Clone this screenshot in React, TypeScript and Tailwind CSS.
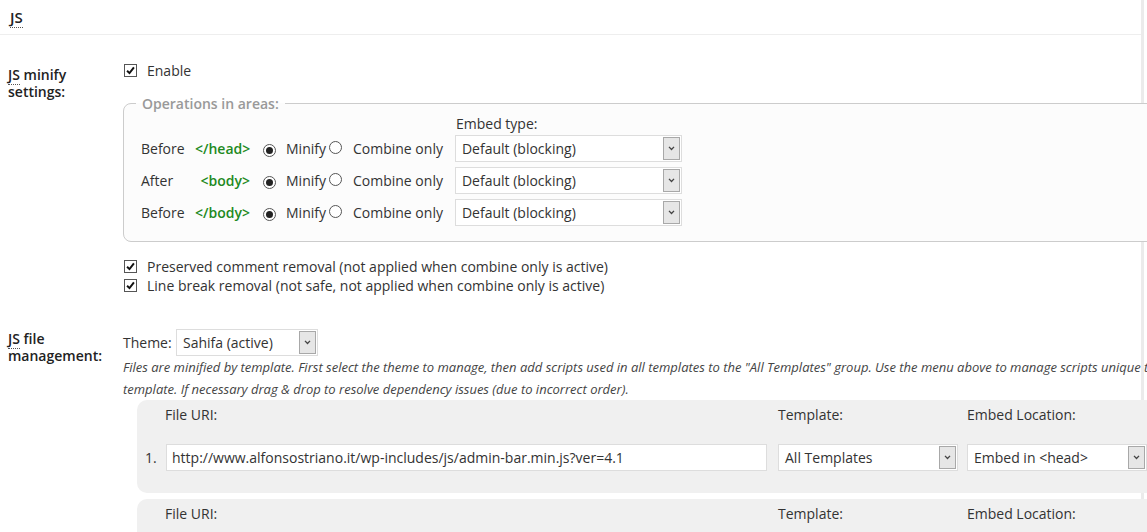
import React from 'react';

// W3 Total Cache style "JS" minify settings panel (static mockup)

const FONT = { fontFamily: '"Open Sans", "Liberation Sans", sans-serif' };

const Check = () => (
  <span className="inline-flex h-[13px] w-[13px] shrink-0 items-center justify-center border border-[#555] bg-white">
    <svg viewBox="0 0 10 10" className="h-[9px] w-[9px]">
      <path d="M1.2 5.2 L3.9 7.9 L8.8 1.6" fill="none" stroke="#111" strokeWidth="2.2" />
    </svg>
  </span>
);

const Radio = ({ on }: { on?: boolean }) => (
  <span className="inline-flex h-[13px] w-[13px] shrink-0 items-center justify-center rounded-full border border-[#555] bg-white">
    {on && <span className="h-[7px] w-[7px] rounded-full bg-[#222]" />}
  </span>
);

const Select = ({ value, className = '' }: { value: string; className?: string }) => (
  <div className={`flex h-[27px] shrink-0 items-stretch border border-[#ddd] bg-white ${className}`}>
    <span className="flex flex-1 items-center overflow-hidden whitespace-nowrap pl-[6px] text-[14px] text-[#333]">{value}</span>
    <span className="my-[1px] mr-[1px] flex w-[17px] items-center justify-center border border-[#a8a8a8] bg-[#e6e6e6]">
      <svg viewBox="0 0 8 6" className="h-[5px] w-[7px]">
        <path d="M1 1 L4 4.2 L7 1" fill="none" stroke="#444" strokeWidth="1.6" />
      </svg>
    </span>
  </div>
);

const AREAS = [
  { pos: 'Before', tag: '</head>' },
  { pos: 'After', tag: '<body>' },
  { pos: 'Before', tag: '</body>' },
];

const Abbr = ({ children }: { children: React.ReactNode }) => (
  <span className="border-b border-dotted border-[#555] leading-[15px]">{children}</span>
);

const FileBox = ({ filled }: { filled?: boolean }) => (
  <div className="ml-[14px] w-[1040px] rounded-[10px] bg-[#f0f0f0] pb-[22px] pt-[5px]">
    <div className="flex h-[18px] items-center text-[14px] text-[#333]">
      <span className="ml-[28px] w-[613px]">File URI:</span>
      <span className="w-[189px]">Template:</span>
      <span>Embed Location:</span>
    </div>
    {filled && (
      <div className="mt-[21px] flex items-center">
        <span className="ml-[8px] w-[21px] text-[14px] text-[#333]">1.</span>
        <div className="flex h-[27px] w-[601px] items-center border border-[#ddd] bg-white pl-[5px] text-[14px] text-[#333]">
          http://www.alfonsostriano.it/wp-includes/js/admin-bar.min.js?ver=4.1
        </div>
        <Select value="All Templates" className="ml-[11px] w-[180px]" />
        <Select value="Embed in <head>" className="ml-[9px] w-[180px]" />
      </div>
    )}
  </div>
);

export default function App() {
  return (
    <div className="relative h-[532px] w-full overflow-hidden bg-white text-[#333]" style={FONT}>
      <div className="h-full w-[1144px] border-r-[3px] border-[#ebebeb]">
        {/* section header */}
        <div className="flex h-[35px] items-center border-b border-[#eee] pl-[10px]">
          <span className="text-[15px] font-semibold text-[#222]">
            <Abbr>JS</Abbr>
          </span>
        </div>

        {/* JS minify settings */}
        <div className="mt-[26px] flex">
          <div className="w-[123px] shrink-0 pl-[8px] pt-[5px] text-[14px] font-semibold leading-[17px] text-[#222]">
            <Abbr>JS</Abbr> minify
            <br />
            settings:
          </div>
          <div className="flex-1">
            <label className="flex h-[18px] items-center gap-[10px] pl-[1px] text-[14px]">
              <Check />
              Enable
            </label>

            <fieldset className="mt-[15px] w-[1060px] rounded-[8px] border border-[#ccc] bg-[#fcfcfc] pb-[15px] pl-[12px]">
              <legend className="px-[6px] text-[14px] font-semibold leading-[19px] text-[#999]">Operations in areas:</legend>
              <div className="ml-[320px] mt-[2px] h-[18px] text-[14px] leading-[18px]">Embed type:</div>
              <div className="mt-[2px] flex flex-col gap-[5px] pl-[5px]">
                {AREAS.map((a, i) => (
                  <div key={i} className="flex h-[27px] items-center text-[14px]">
                    <span className="w-[54px]">{a.pos}</span>
                    <span className="w-[55px] text-right font-semibold text-[#1e8a1e]">{a.tag}</span>
                    <span className="ml-[13px]">
                      <Radio on />
                    </span>
                    <span className="ml-[10px]">Minify</span>
                    <span className="ml-[3px]">
                      <Radio />
                    </span>
                    <span className="ml-[11px]">Combine only</span>
                    <Select value="Default (blocking)" className="ml-[12px] w-[227px]" />
                  </div>
                ))}
              </div>
            </fieldset>

            <div className="mt-[15px] flex flex-col text-[14px] leading-[19px]">
              <label className="flex items-center gap-[10px] pl-[1px]">
                <Check />
                Preserved comment removal (not applied when combine only is active)
              </label>
              <label className="flex items-center gap-[10px] pl-[1px]">
                <Check />
                Line break removal (not safe, not applied when combine only is active)
              </label>
            </div>
          </div>
        </div>

        {/* JS file management */}
        <div className="mt-[34px] flex">
          <div className="w-[123px] shrink-0 pl-[8px] pt-[1px] text-[14px] font-semibold leading-[17px] text-[#222]">
            <Abbr>JS</Abbr> file
            <br />
            management:
          </div>
          <div className="flex-1">
            <div className="flex items-center text-[14px]">
              <span className="w-[53px]">Theme:</span>
              <Select value="Sahifa (active)" className="w-[142px]" />
            </div>
            <p className="whitespace-nowrap text-[13px] italic leading-[22px] text-[#444]">
              Files are minified by template. First select the theme to manage, then add scripts used in all templates to the "All Templates" group. Use the menu above to manage scripts unique to each
              <br />
              template. If necessary drag &amp; drop to resolve dependency issues (due to incorrect order).
            </p>
            <div className="flex flex-col gap-[6px]">
              <FileBox filled />
              <FileBox />
            </div>
          </div>
        </div>
      </div>
    </div>
  );
}
